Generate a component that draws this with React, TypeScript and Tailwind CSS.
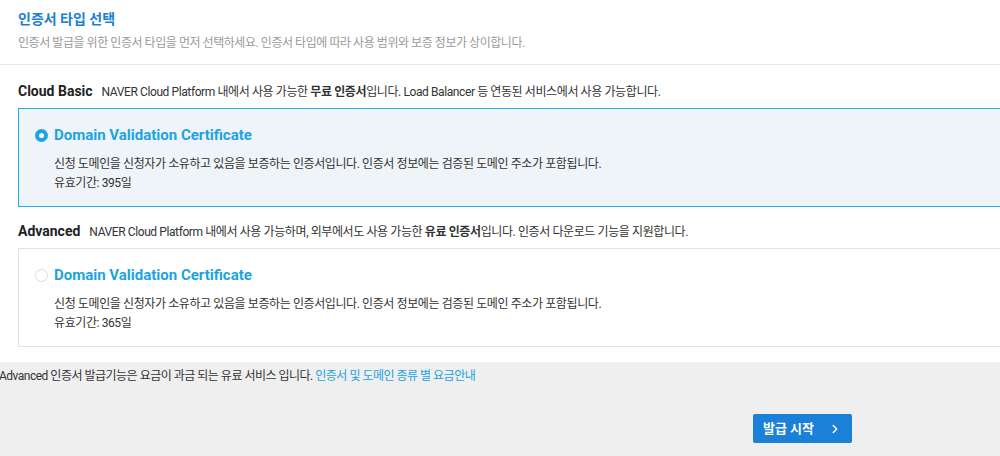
import { ChevronRight } from 'lucide-react';

const FONT = "font-['Roboto','Noto_Sans_CJK_KR',sans-serif]";

type CertProps = {
  selected: boolean;
  days: number;
};

function CertBox({ selected, days }: CertProps) {
  return (
    <div
      className={`-mr-[40px] border pl-[16px] pt-[16px] pb-[13px] ${
        selected ? 'border-[#1fb0ef] bg-[#eff4f8]' : 'border-[#e2e2e2] bg-white'
      }`}
    >
      <div className="flex items-center h-5">
        {selected ? (
          <span className="w-[13px] h-[13px] rounded-full bg-[#1ba3e3] flex items-center justify-center">
            <span className="w-[5px] h-[5px] rounded-full bg-white" />
          </span>
        ) : (
          <span className="w-[13px] h-[13px] rounded-full border border-[#dcdcdc] bg-white" />
        )}
        <span className="ml-[6px] text-[15px] font-bold text-[#1ba3e3] leading-5">Domain Validation Certificate</span>
      </div>
      <div className="pl-[19px] mt-[10px] text-[12px] leading-[19px] tracking-[-0.4px] text-[#333]">
        <p>신청 도메인을 신청자가 소유하고 있음을 보증하는 인증서입니다. 인증서 정보에는 검증된 도메인 주소가 포함됩니다.</p>
        <p>유효기간: {days}일</p>
      </div>
    </div>
  );
}

export default function App() {
  return (
    <div className={`${FONT} w-[1000px] h-[456px] overflow-hidden bg-white flex flex-col`}>
      {/* header */}
      <div className="px-[18px] pt-[9px] pb-[12px] border-b border-[#e6e6e6]">
        <h1 className="text-[14px] leading-5 font-bold text-[#1a7fd6]">인증서 타입 선택</h1>
        <p className="mt-[5px] text-[12px] leading-[18px] tracking-[-0.45px] text-[#999]">
          인증서 발급을 위한 인증서 타입을 먼저 선택하세요. 인증서 타입에 따라 사용 범위와 보증 정보가 상이합니다.
        </p>
      </div>

      <div className="px-[18px] pt-[16px] pb-[15px]">
        <div className="flex items-baseline h-5 mb-[7px]">
          <span className="text-[14px] font-bold text-[#222]">Cloud Basic</span>
          <span className="ml-[9px] text-[12px] tracking-[-0.4px] text-[#333]">
            NAVER Cloud Platform 내에서 사용 가능한 <b>무료 인증서</b>입니다. Load Balancer 등 연동된 서비스에서 사용 가능합니다.
          </span>
        </div>
        <CertBox selected days={395} />

        <div className="flex items-baseline h-5 mt-[14px] mb-[7px]">
          <span className="text-[14px] font-bold text-[#222]">Advanced</span>
          <span className="ml-[9px] text-[12px] tracking-[-0.4px] text-[#333]">
            NAVER Cloud Platform 내에서 사용 가능하며, 외부에서도 사용 가능한 <b>유료 인증서</b>입니다. 인증서 다운로드 기능을 지원합니다.
          </span>
        </div>
        <CertBox selected={false} days={365} />
      </div>

      {/* footer */}
      <div className="flex-1 bg-[#efefef] pt-[5px]">
        <p className="-ml-px text-[12px] leading-[18px] tracking-[-0.5px] text-[#333]">
          Advanced 인증서 발급기능은 요금이 과금 되는 유료 서비스 입니다.{' '}
          <a className="text-[#1ba3e3]">인증서 및 도메인 종류 별 요금안내</a>
        </p>
        <div className="flex justify-end pr-[148px] mt-[29px]">
          <button className="w-[99px] h-[29px] rounded-[2px] bg-[#1b80d7] text-white text-[13px] font-bold flex items-center justify-center gap-[14px]">
            <span>발급 시작</span>
            <ChevronRight className="w-[14px] h-[14px]" strokeWidth={2.5} />
          </button>
        </div>
      </div>
    </div>
  );
}
